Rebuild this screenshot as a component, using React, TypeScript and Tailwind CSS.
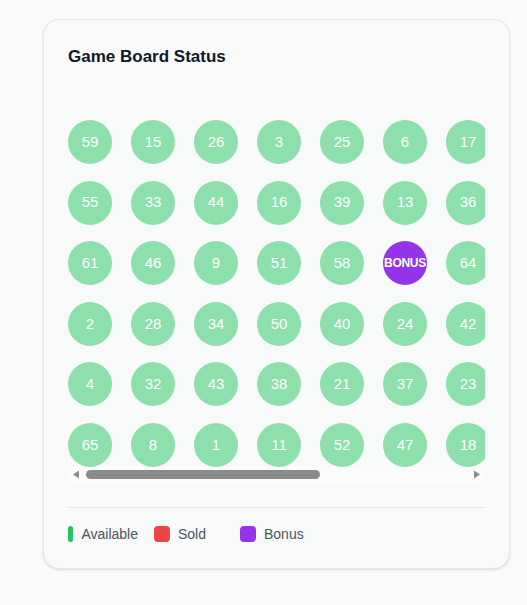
const cells: (number | "BONUS")[][] = [
  [59, 15, 26, 3, 25, 6, 17, 5, 7, 10, 12],
  [55, 33, 44, 16, 39, 13, 36, 14, 19, 20, 22],
  [61, 46, 9, 51, 58, "BONUS", 64, 27, 29, 30, 31],
  [2, 28, 34, 50, 40, 24, 42, 35, 41, 45, 48],
  [4, 32, 43, 38, 21, 37, 23, 49, 53, 54, 56],
  [65, 8, 1, 11, 52, 47, 18, 57, 60, 62, 63],
];

const legend = [
  { label: "Available", color: "bg-[#22c55e]" },
  { label: "Sold", color: "bg-[#ef4444]" },
  { label: "Bonus", color: "bg-[#9333ea]" },
];

export default function App() {
  return (
    <div className="min-h-[605px] bg-[#f9fafb] pt-[19px] pl-[43px] font-['Liberation_Sans',Arial,sans-serif]">
      <div className="w-[467px] rounded-2xl border border-[#e5e7eb] bg-[#f8f9f9] p-6 shadow-sm">
        <h2 className="text-[17px] font-bold leading-[26px] text-[#111827]">Game Board Status</h2>

        {/* board */}
        <div className="mt-[50px] overflow-hidden">
          <div className="grid w-max grid-cols-[repeat(11,44px)] gap-x-[19px] gap-y-[16.6px]">
            {cells.flat().map((c, i) =>
              c === "BONUS" ? (
                <div
                  key={i}
                  className="flex h-11 w-11 items-center justify-center rounded-full bg-[#9333ea] text-[12px] font-semibold tracking-[-0.3px] text-white"
                >
                  BONUS
                </div>
              ) : (
                <div
                  key={i}
                  className="flex h-11 w-11 items-center justify-center rounded-full bg-[#8ddfab] text-[15px] text-white"
                >
                  {c}
                </div>
              )
            )}
          </div>
        </div>

        {/* scrollbar */}
        <div className="flex h-[15px] items-center bg-[#fbfbfb] px-1">
          <svg width="8" height="9" viewBox="0 0 8 9">
            <path d="M7 0.5 L1 4.5 L7 8.5 Z" fill="#8a8a8a" />
          </svg>
          <div className="ml-[6px] h-[9px] w-[234px] rounded-full bg-[#8a8a8a]" />
          <div className="flex-1" />
          <svg width="8" height="9" viewBox="0 0 8 9">
            <path d="M1 0.5 L7 4.5 L1 8.5 Z" fill="#8a8a8a" />
          </svg>
        </div>

        <div className="mt-[25px] border-t border-[#e5e7eb] pt-4">
          <div className="flex gap-4">
            {legend.map((l) => (
              <div key={l.label} className="flex w-[70px] items-center gap-2">
                <span className={`h-4 w-4 rounded ${l.color}`} />
                <span className="text-sm leading-5 text-[#4b5563]">{l.label}</span>
              </div>
            ))}
          </div>
        </div>
      </div>
    </div>
  );
}
